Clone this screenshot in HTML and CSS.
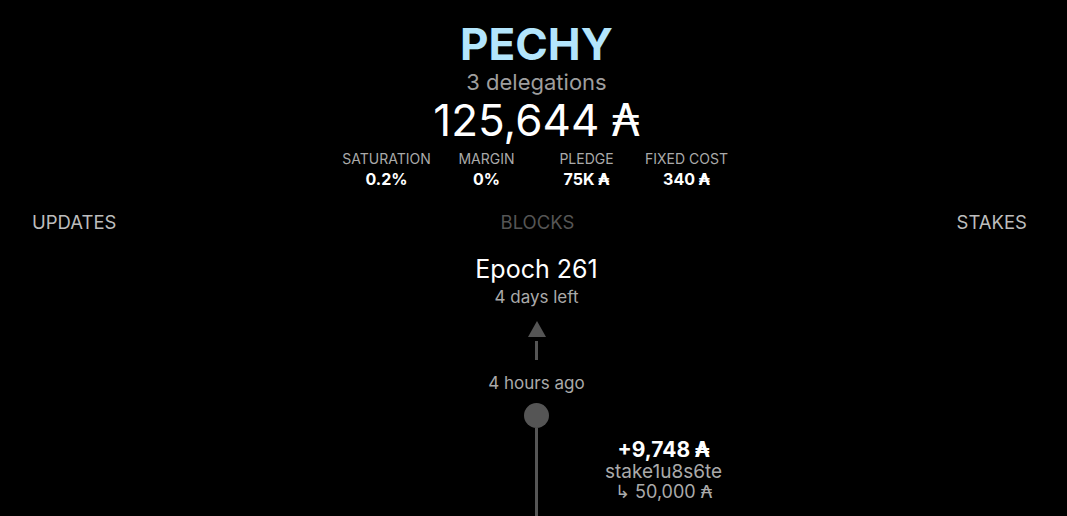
FILE: index.html
```html
<!DOCTYPE html>
<html lang="en">
<head>
<meta charset="utf-8">
<title>PECHY</title>
<link rel="stylesheet" href="styles.css">
</head>
<body>
<div class="page">
  <header class="pool">
    <h1 class="pool-name">PECHY</h1>
    <div class="pool-delegations">3 delegations</div>
    <div class="pool-stake">125,644 <span class="ada">₳</span></div>
    <div class="stats">
      <div class="stat"><div class="stat-label">SATURATION</div><div class="stat-value">0.2%</div></div>
      <div class="stat"><div class="stat-label">MARGIN</div><div class="stat-value">0%</div></div>
      <div class="stat"><div class="stat-label">PLEDGE</div><div class="stat-value">75K <span class="ada">₳</span></div></div>
      <div class="stat"><div class="stat-label">FIXED COST</div><div class="stat-value">340 <span class="ada">₳</span></div></div>
    </div>
  </header>

  <nav class="tabs">
    <div class="tab">UPDATES</div>
    <div class="tab tab-active">BLOCKS</div>
    <div class="tab">STAKES</div>
  </nav>

  <section class="timeline">
    <div class="epoch">
      <div class="epoch-title">Epoch 261</div>
      <div class="epoch-sub">4 days left</div>
    </div>
    <div class="arrow">
      <div class="arrow-head"></div>
      <div class="arrow-stem"></div>
    </div>
    <div class="time-label">4 hours ago</div>
    <div class="node"></div>
    <div class="track">
      <div class="track-side"></div>
      <div class="track-line"></div>
      <div class="track-side">
        <div class="entry">
          <div class="entry-amount">+9,748 <span class="ada">₳</span></div>
          <div class="entry-addr">stake1u8s6te</div>
          <div class="entry-prev"><span class="hook">↳</span> 50,000 <span class="ada">₳</span></div>
        </div>
      </div>
    </div>
  </section>
</div>
</body>
</html>
```

FILE: styles.css
```css
html, body {
  margin: 0;
  padding: 0;
  background: #000;
  height: 100%;
  overflow: hidden;
}

body {
  font-family: Inter, "Noto Sans", "DejaVu Sans", sans-serif;
  color: #fff;
}

.page {
  display: flex;
  flex-direction: column;
  height: 100%;
}

.pool {
  display: flex;
  flex-direction: column;
  align-items: center;
  padding-top: 18px;
  padding-left: 6px;
}

.pool-name {
  margin: 0;
  font-size: 44px;
  line-height: 52px;
  font-weight: 700;
  color: #b3e5fc;
}

.pool-delegations {
  font-size: 22px;
  line-height: 24px;
  color: #9e9e9e;
}

.pool-stake {
  font-size: 44px;
  line-height: 50px;
  font-weight: 400;
  color: #fff;
  padding-top: 1px;
}

.ada {
  font-family: "DejaVu Sans", sans-serif;
}

.stats {
  display: flex;
  margin-top: 5px;
}

.stat {
  width: 100px;
  text-align: center;
}

.stat-label {
  font-size: 14px;
  line-height: 16px;
  color: #aaa;
}

.stat-value {
  margin-top: 2px;
  font-size: 16px;
  line-height: 20px;
  font-weight: 700;
  color: #fff;
}

.tabs {
  display: flex;
  justify-content: space-between;
  padding: 0 40px 0 32px;
  margin-top: 20px;
}

.tab {
  font-size: 18.5px;
  line-height: 24px;
  color: #bdbdbd;
}

.tab-active {
  color: #555;
  padding-left: 2px;
}

.timeline {
  flex: 1;
  display: flex;
  flex-direction: column;
  align-items: center;
  padding-left: 6px;
  margin-top: 21px;
}

.epoch {
  text-align: center;
}

.epoch-title {
  font-size: 25px;
  line-height: 28px;
  color: #fff;
}

.epoch-sub {
  margin-top: 4px;
  font-size: 17px;
  line-height: 20px;
  color: #aaa;
}

.arrow {
  display: flex;
  flex-direction: column;
  align-items: center;
  margin-top: 14px;
}

.arrow-head {
  width: 0;
  height: 0;
  border-left: 9px solid transparent;
  border-right: 9px solid transparent;
  border-bottom: 16px solid #555;
}

.arrow-stem {
  width: 3px;
  height: 19px;
  margin-top: 4px;
  background: #555;
}

.time-label {
  margin-top: 13px;
  font-size: 17px;
  line-height: 20px;
  color: #aaa;
}

.node {
  width: 25px;
  height: 25px;
  border-radius: 50%;
  background: #555;
  margin-top: 10px;
}

.track {
  flex: 1;
  align-self: stretch;
  display: grid;
  grid-template-columns: 1fr 3px 1fr;
}

.track-line {
  background: #555;
}

.entry {
  display: inline-block;
  margin-left: 67px;
  margin-top: 11px;
  text-align: center;
}

.entry-amount {
  font-size: 21px;
  line-height: 22px;
  font-weight: 700;
  color: #fff;
}

.entry-addr {
  font-size: 19px;
  line-height: 21px;
  color: #aaa;
}

.entry-prev {
  font-size: 18px;
  line-height: 20px;
  color: #aaa;
}

.hook {
  font-family: "DejaVu Sans", sans-serif;
  font-size: 18px;
}
```
